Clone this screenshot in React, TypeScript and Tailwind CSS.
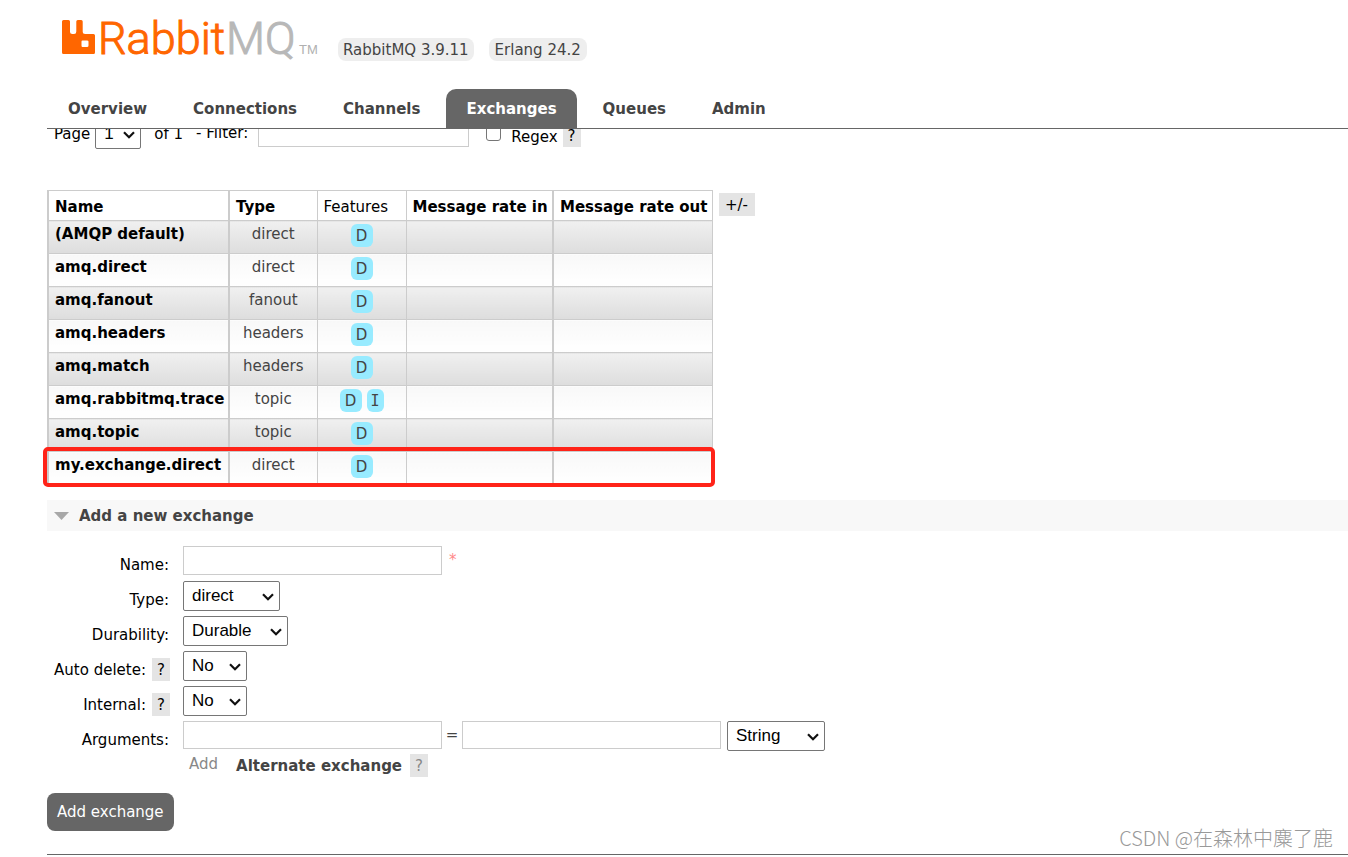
import React from "react";
import clsx from "clsx";

const tabs = ["Overview", "Connections", "Channels", "Exchanges", "Queues", "Admin"];

const exchanges = [
  { name: "(AMQP default)", type: "direct", features: ["D"] },
  { name: "amq.direct", type: "direct", features: ["D"] },
  { name: "amq.fanout", type: "fanout", features: ["D"] },
  { name: "amq.headers", type: "headers", features: ["D"] },
  { name: "amq.match", type: "headers", features: ["D"] },
  { name: "amq.rabbitmq.trace", type: "topic", features: ["D", "I"] },
  { name: "amq.topic", type: "topic", features: ["D"] },
  { name: "my.exchange.direct", type: "direct", features: ["D"] },
];

function Logo() {
  return (
    <svg width="258" height="56" viewBox="0 0 258 56" role="img" aria-label="RabbitMQ" className="shrink-0 overflow-visible">
      <path
        fill="#ff6600"
        fillRule="evenodd"
        d="M1.5 5H6.5Q8 5 8 6.5V16.5Q8 19 10.5 19H12Q14.300 19 14.300 16.500V6.500Q14.300 5 15.800 5H19.200Q20.700 5 20.700 6.500V16.500Q20.700 19 23.200 19H31.500Q33 19 33 20.500V37.500Q33 39 31.500 39H1.500Q0 39 0 37.500V6.500Q0 5 1.500 5ZM20.500 25.500Q19.500 25.500 19.500 26.500V30.500Q19.500 32 20.500 32H25Q26.500 32 26.500 30.500V26.500Q26.500 25.500 25 25.500Z"
      />
      <text x="36" y="39" fontFamily="Roboto" fontWeight="300" fontSize="45" fill="#ff6600" stroke="#ff6600" strokeWidth="1">Rabbit</text>
      <text x="164" y="39" fontFamily="Roboto" fontWeight="300" fontSize="45" fill="#b8b8b8" stroke="#b8b8b8" strokeWidth="1">MQ</text>
      <text x="237" y="39" fontFamily="Liberation Sans" fontSize="13" fill="#b0b0b0">TM</text>
    </svg>
  );
}

function Help({ muted = false }: { muted?: boolean }) {
  return (
    <button
      type="button"
      aria-label="Help"
      className={clsx(
        "block h-[23px] w-[18px] shrink-0 bg-[#e4e4e4] pt-[2px] text-center leading-[21px]",
        muted ? "text-[#888]" : "text-black"
      )}
    >
      ?
    </button>
  );
}

function Select({ id, label, options, width }: { id: string; label?: string; options: string[]; width: string }) {
  return (
    <span className={clsx("relative block h-[30px] shrink-0", width)}>
      <select
        id={id}
        aria-label={label}
        className="block h-full w-full appearance-none rounded-[2px] border border-[#767676] bg-white pl-2 font-['Liberation_Sans',sans-serif] text-[17px] leading-[28px] text-black"
      >
        {options.map((o) => (
          <option key={o}>{o}</option>
        ))}
      </select>
      <svg width="12" height="8" viewBox="0 0 12 8" className="pointer-events-none absolute top-3 right-[6px]">
        <path d="M1 1.200L6 6.200L11 1.200" fill="none" stroke="#111" strokeWidth="2.200" />
      </svg>
    </span>
  );
}

const inputClass = "block border border-[#ccc] bg-white px-1 text-black shrink-0";
const badgeClass = "block h-[23px] pt-[2px] leading-[21px]";

function Row({ id, label, help, children }: { id: string; label: string; help?: boolean; children: React.ReactNode }) {
  return (
    <>
      <div className={clsx("flex items-start justify-end gap-[6px] pt-[7px] whitespace-nowrap", !help && "pr-px")}>
        <label htmlFor={id} className="pt-px text-black">{label}</label>
        {help && <Help />}
      </div>
      <div className="flex items-start">{children}</div>
    </>
  );
}

export default function App() {
  return (
    <div className="min-h-[857px] bg-white pl-[47px] font-['Verdana','DejaVu_Sans',sans-serif] text-[15px] leading-[23px] text-[#444]">
      <header className="relative z-10 border-b border-[#666] bg-white">
        <div className="flex h-[89px] items-start pt-[15px] pl-[15px]">
          <Logo />
          <div className="ml-[18px] flex gap-[15px] pt-[23px]">
            <span className={clsx(badgeClass, "rounded-lg bg-[#eee] px-[5px]")}>RabbitMQ 3.9.11</span>
            <span className={clsx(badgeClass, "rounded-lg bg-[#eee] px-[6px]")}>Erlang 24.2</span>
          </div>
        </div>
        <nav className="flex gap-[6px] pl-px font-bold">
          {tabs.map((t) => (
            <a
              key={t}
              href="#"
              className={clsx("rounded-t-[10px] px-5 pt-[9px] pb-[7px]", t === "Exchanges" && "bg-[#666] text-white")}
            >
              {t}
            </a>
          ))}
        </nav>
      </header>

      <main>
        <div className="-mt-[10px] flex items-start pl-[7px] text-black">
          <label htmlFor="page" className="pt-1">Page</label>
          <span className="ml-[5px]">
            <Select id="page" options={["1"]} width="w-[46px]" />
          </span>
          <span className="ml-[13px] pt-1">of 1</span>
          <label htmlFor="filter" className="ml-[13px] pt-[3px]">- Filter:</label>
          <input id="filter" type="text" className={clsx(inputClass, "ml-[10px] h-[28px] w-[211px]")} />
          <input
            id="regex"
            type="checkbox"
            className="mt-[7px] ml-[17px] h-[15px] w-[15px] appearance-none rounded-[3px] border border-[#767676]"
          />
          <label htmlFor="regex" className="mr-[5px] ml-[10px] pt-[7px]">Regex</label>
          <span className="pt-[5px]"><Help /></span>
        </div>

        <div className="mt-[41px] flex items-start gap-[6px]">
          <div className="relative">
            <table className="w-[664px] table-fixed border-collapse border border-[#ccc] text-black">
              <colgroup>
                <col className="w-[181px]" />
                <col className="w-[88px]" />
                <col className="w-[89px]" />
                <col className="w-[147px]" />
                <col className="w-[159px]" />
              </colgroup>
              <thead>
                <tr className="h-[30px] text-left whitespace-nowrap">
                  <th className="border border-l-2 border-[#ccc] pt-1 pr-0 pb-0 pl-[6px]">Name</th>
                  <th className="border border-l-2 border-[#ccc] pt-1 pr-0 pb-0 pl-[6px]">Type</th>
                  <th className="border border-[#ccc] pt-1 pr-0 pb-0 pl-[6px] font-normal">Features</th>
                  <th className="border border-[#ccc] pt-1 pr-0 pb-0 pl-[6px]">Message rate in</th>
                  <th className="border border-l-2 border-[#ccc] pt-1 pr-0 pb-0 pl-[6px]">Message rate out</th>
                </tr>
              </thead>
              <tbody>
                {exchanges.map((e, i) => {
                  const cell = clsx(
                    "border border-[#ccc] bg-linear-to-b p-0 align-top",
                    i % 2 === 0 ? "from-[#f0f0f0] to-[#dddddd]" : "from-[#f8f8f8] to-white"
                  );
                  return (
                    <tr key={e.name} className="h-[33px]">
                      <td className={clsx(cell, "border-l-2")}>
                        <a href="#" className="block pt-[2px] pl-[6px] font-bold whitespace-nowrap">{e.name}</a>
                      </td>
                      <td className={clsx(cell, "border-l-2 text-center text-[#444]")}>
                        <div className="pt-[2px]">{e.type}</div>
                      </td>
                      <td className={cell}>
                        <div className="flex justify-center gap-[5px] pt-[3px] text-[#444]">
                          {e.features.map((f) => (
                            <abbr
                              key={f}
                              className={clsx(
                                badgeClass,
                                "rounded-[6px] bg-[#98ebff] text-center",
                                f === "I" ? "w-[17px] font-['DejaVu_Sans_Mono',monospace]" : "w-[22px]"
                              )}
                            >
                              {f}
                            </abbr>
                          ))}
                        </div>
                      </td>
                      <td className={cell} />
                      <td className={clsx(cell, "border-l-2")} />
                    </tr>
                  );
                })}
              </tbody>
            </table>
            <div className="pointer-events-none absolute -right-[2px] -bottom-[2px] -left-[4px] h-[40px] rounded-[5px] border-4 border-[#ff2318]" />
          </div>
          <button type="button" className={clsx(badgeClass, "mt-[3px] w-[36px] bg-[#e4e4e4] text-center text-black")}>+/-</button>
        </div>

        <section>
          <h2 className="mt-[15px] bg-[#f8f8f8] font-bold">
            <button type="button" className="flex h-[31px] w-full items-center gap-[10px] pt-px pl-[7px] text-left">
              <svg width="15" height="8" viewBox="0 0 15 8">
                <path d="M0 0H15L7.500 8Z" fill="#a8a8a8" />
              </svg>
              Add a new exchange
            </button>
          </h2>

          <form onSubmit={(e) => e.preventDefault()}>
            <div className="mt-[15px] grid auto-rows-[35px] grid-cols-[123px_1fr] gap-x-[13px]">
              <Row id="name" label="Name:">
                <input id="name" type="text" className={clsx(inputClass, "h-[29px] w-[259px]")} />
                <span className="ml-[7px] pt-[3px] text-[#f88]">*</span>
              </Row>
              <Row id="type" label="Type:">
                <Select id="type" options={["direct", "fanout", "headers", "topic"]} width="w-[97px]" />
              </Row>
              <Row id="durability" label="Durability:">
                <Select id="durability" options={["Durable", "Transient"]} width="w-[105px]" />
              </Row>
              <Row id="auto-delete" label="Auto delete:" help>
                <Select id="auto-delete" options={["No", "Yes"]} width="w-[64px]" />
              </Row>
              <Row id="internal" label="Internal:" help>
                <Select id="internal" options={["No", "Yes"]} width="w-[64px]" />
              </Row>
              <Row id="arguments" label="Arguments:">
                <input id="arguments" type="text" className={clsx(inputClass, "h-[28px] w-[259px]")} />
                <span className="w-5 pt-[3px] text-center">=</span>
                <input aria-label="Argument value" type="text" className={clsx(inputClass, "mr-[6px] h-[28px] w-[259px]")} />
                <Select id="argument-type" label="Argument type" options={["String", "Number", "Boolean", "List"]} width="w-[98px]" />
              </Row>
            </div>
            <div className="-mt-[3px] flex items-start pl-[142px] text-[#888]">
              <button type="button" className="block">Add</button>
              <button type="button" className="mt-[2px] ml-[18px] block font-bold text-[#444]">Alternate exchange</button>
              <span className="mt-px ml-2"><Help muted /></span>
            </div>
            <button type="submit" className="mt-[15px] block h-[38px] rounded-lg bg-[#666] px-[10px] pt-px text-white">
              Add exchange
            </button>
          </form>
        </section>
      </main>

      <footer className="mt-[23px] border-t border-[#666]" />
      <div className="absolute right-[15px] bottom-1 font-['Noto_Sans_CJK_SC',sans-serif] text-[20px] leading-[30px] font-light text-[#999]">
        CSDN @在森林中麋了鹿
      </div>
    </div>
  );
}
